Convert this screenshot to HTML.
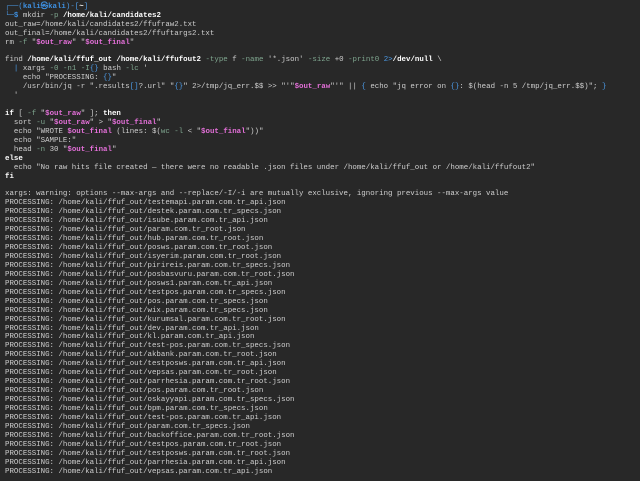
<!DOCTYPE html>
<html><head><meta charset="utf-8"><style>
html,body{margin:0;padding:0;background:#282828;width:640px;height:481px;overflow:hidden}
pre{margin:0;padding:2.8px 0 0 5px;font-family:"Liberation Mono",monospace;font-size:7.43px;line-height:8.93px;color:#cfcfcf;white-space:pre}
.b{color:#3d8fe0;font-weight:bold}.bl{color:#4c9be8}.w{color:#fff;font-weight:bold}.g{color:#7fa68f}.p{color:#e36fd8;font-weight:bold}.k{color:#fff;font-weight:bold}
</style></head><body><pre><span class="bl">┌──(</span><span class="b">kali㉿kali</span><span class="bl">)-[</span><span class="w">~</span><span class="bl">]</span>
<span class="bl">└─</span><span class="b">$</span> mkdir <span class="g">-p</span> <span class="w">/home/kali/candidates2</span>
out_raw=/home/kali/candidates2/ffufraw2.txt
out_final=/home/kali/candidates2/ffuftargs2.txt
rm <span class="g">-f</span> "<span class="p">$out_raw</span>" "<span class="p">$out_final</span>"

find <span class="w">/home/kali/ffuf_out</span> <span class="w">/home/kali/ffufout2</span> <span class="g">-type</span> f <span class="g">-name</span> '*.json' <span class="g">-size</span> +0 <span class="g">-print0</span> <span class="bl">2&gt;</span><span class="w">/dev/null</span> \
  <span class="bl">|</span> xargs <span class="g">-0</span> <span class="g">-n1</span> <span class="g">-I</span><span class="bl">{}</span> bash <span class="g">-lc</span> '
    echo "PROCESSING: <span class="bl">{}</span>"
    /usr/bin/jq -r ".results<span class="bl">[]</span>?.url" "<span class="bl">{}</span>" 2&gt;/tmp/jq_err.$$ &gt;&gt; "'"<span class="p">$out_raw</span>"'" || <span class="bl">{</span> echo "jq error on <span class="bl">{}</span>: $(head -n 5 /tmp/jq_err.$$)"; <span class="bl">}</span>
  '

<span class="k">if</span> [ <span class="g">-f</span> "<span class="p">$out_raw</span>" ]; <span class="k">then</span>
  sort <span class="g">-u</span> "<span class="p">$out_raw</span>" &gt; "<span class="p">$out_final</span>"
  echo "WROTE <span class="p">$out_final</span> (lines: $(<span class="g">wc</span> <span class="g">-l</span> &lt; "<span class="p">$out_final</span>"))"
  echo "SAMPLE:"
  head <span class="g">-n</span> 30 "<span class="p">$out_final</span>"
<span class="k">else</span>
  echo "No raw hits file created — there were no readable .json files under /home/kali/ffuf_out or /home/kali/ffufout2"
<span class="k">fi</span>

xargs: warning: options --max-args and --replace/-I/-i are mutually exclusive, ignoring previous --max-args value
PROCESSING: /home/kali/ffuf_out/testemapi.param.com.tr_api.json
PROCESSING: /home/kali/ffuf_out/destek.param.com.tr_specs.json
PROCESSING: /home/kali/ffuf_out/isube.param.com.tr_api.json
PROCESSING: /home/kali/ffuf_out/param.com.tr_root.json
PROCESSING: /home/kali/ffuf_out/hub.param.com.tr_root.json
PROCESSING: /home/kali/ffuf_out/posws.param.com.tr_root.json
PROCESSING: /home/kali/ffuf_out/isyerim.param.com.tr_root.json
PROCESSING: /home/kali/ffuf_out/pirireis.param.com.tr_specs.json
PROCESSING: /home/kali/ffuf_out/posbasvuru.param.com.tr_root.json
PROCESSING: /home/kali/ffuf_out/posws1.param.com.tr_api.json
PROCESSING: /home/kali/ffuf_out/testpos.param.com.tr_specs.json
PROCESSING: /home/kali/ffuf_out/pos.param.com.tr_specs.json
PROCESSING: /home/kali/ffuf_out/wix.param.com.tr_specs.json
PROCESSING: /home/kali/ffuf_out/kurumsal.param.com.tr_root.json
PROCESSING: /home/kali/ffuf_out/dev.param.com.tr_api.json
PROCESSING: /home/kali/ffuf_out/kl.param.com.tr_api.json
PROCESSING: /home/kali/ffuf_out/test-pos.param.com.tr_specs.json
PROCESSING: /home/kali/ffuf_out/akbank.param.com.tr_root.json
PROCESSING: /home/kali/ffuf_out/testposws.param.com.tr_api.json
PROCESSING: /home/kali/ffuf_out/vepsas.param.com.tr_root.json
PROCESSING: /home/kali/ffuf_out/parrhesia.param.com.tr_root.json
PROCESSING: /home/kali/ffuf_out/pos.param.com.tr_root.json
PROCESSING: /home/kali/ffuf_out/oskayyapi.param.com.tr_specs.json
PROCESSING: /home/kali/ffuf_out/bpm.param.com.tr_specs.json
PROCESSING: /home/kali/ffuf_out/test-pos.param.com.tr_api.json
PROCESSING: /home/kali/ffuf_out/param.com.tr_specs.json
PROCESSING: /home/kali/ffuf_out/backoffice.param.com.tr_root.json
PROCESSING: /home/kali/ffuf_out/testpos.param.com.tr_root.json
PROCESSING: /home/kali/ffuf_out/testposws.param.com.tr_root.json
PROCESSING: /home/kali/ffuf_out/parrhesia.param.com.tr_api.json
PROCESSING: /home/kali/ffuf_out/vepsas.param.com.tr_api.json</pre></body></html>
